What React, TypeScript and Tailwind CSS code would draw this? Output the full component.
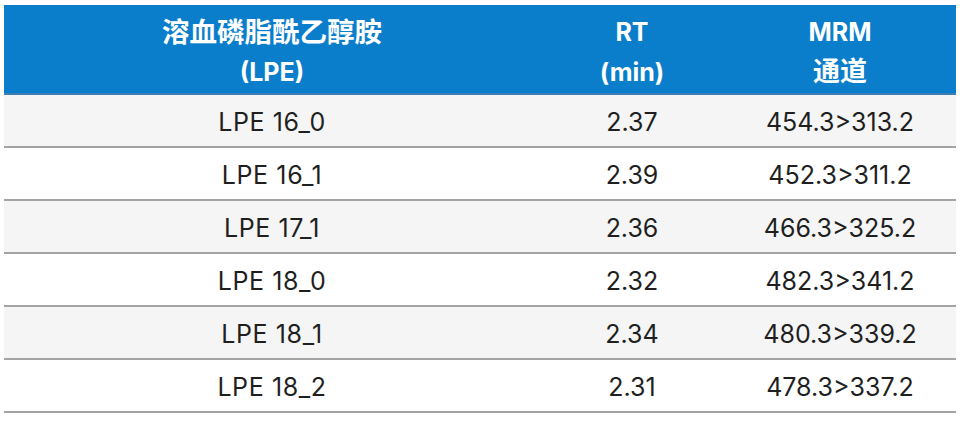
import React from "react";

const rows = [
  ["LPE 16_0", "2.37", "454.3>313.2"],
  ["LPE 16_1", "2.39", "452.3>311.2"],
  ["LPE 17_1", "2.36", "466.3>325.2"],
  ["LPE 18_0", "2.32", "482.3>341.2"],
  ["LPE 18_1", "2.34", "480.3>339.2"],
  ["LPE 18_2", "2.31", "478.3>337.2"],
];

export default function App() {
  return (
    <div
      className="w-[964px] h-[421px] bg-white pt-[5px] pl-[4px]"
      style={{ fontFamily: 'Inter, "Noto Sans CJK SC", sans-serif' }}
    >
      <div className="w-[952px]">
        <div className="flex h-[90px] pt-[6px] bg-[#0b7ecb] border-b-2 border-[#3d7fb0] text-white font-bold text-[25px] leading-[40px]">
          <div className="w-[536px] flex flex-col items-center justify-center">
            <div className="text-[27.5px]">溶血磷脂酰乙醇胺</div>
            <div>(LPE)</div>
          </div>
          <div className="w-[184px] flex flex-col items-center justify-center">
            <div>RT</div>
            <div>(min)</div>
          </div>
          <div className="flex-1 flex flex-col items-center justify-center">
            <div>MRM</div>
            <div className="text-[27px]">通道</div>
          </div>
        </div>
        {rows.map((r, i) => (
          <div
            key={i}
            className={`flex h-[53px] pt-[4px] border-b-2 border-[#a3a3a3] text-[#1f1f1f] text-[25px] ${
              i % 2 === 0 ? "bg-[#f5f5f5]" : "bg-white"
            }`}
          >
            <div className="w-[536px] flex items-center justify-center tracking-[0.6px]">{r[0]}</div>
            <div className="w-[184px] flex items-center justify-center">{r[1]}</div>
            <div className="flex-1 flex items-center justify-center">{r[2]}</div>
          </div>
        ))}
      </div>
    </div>
  );
}
